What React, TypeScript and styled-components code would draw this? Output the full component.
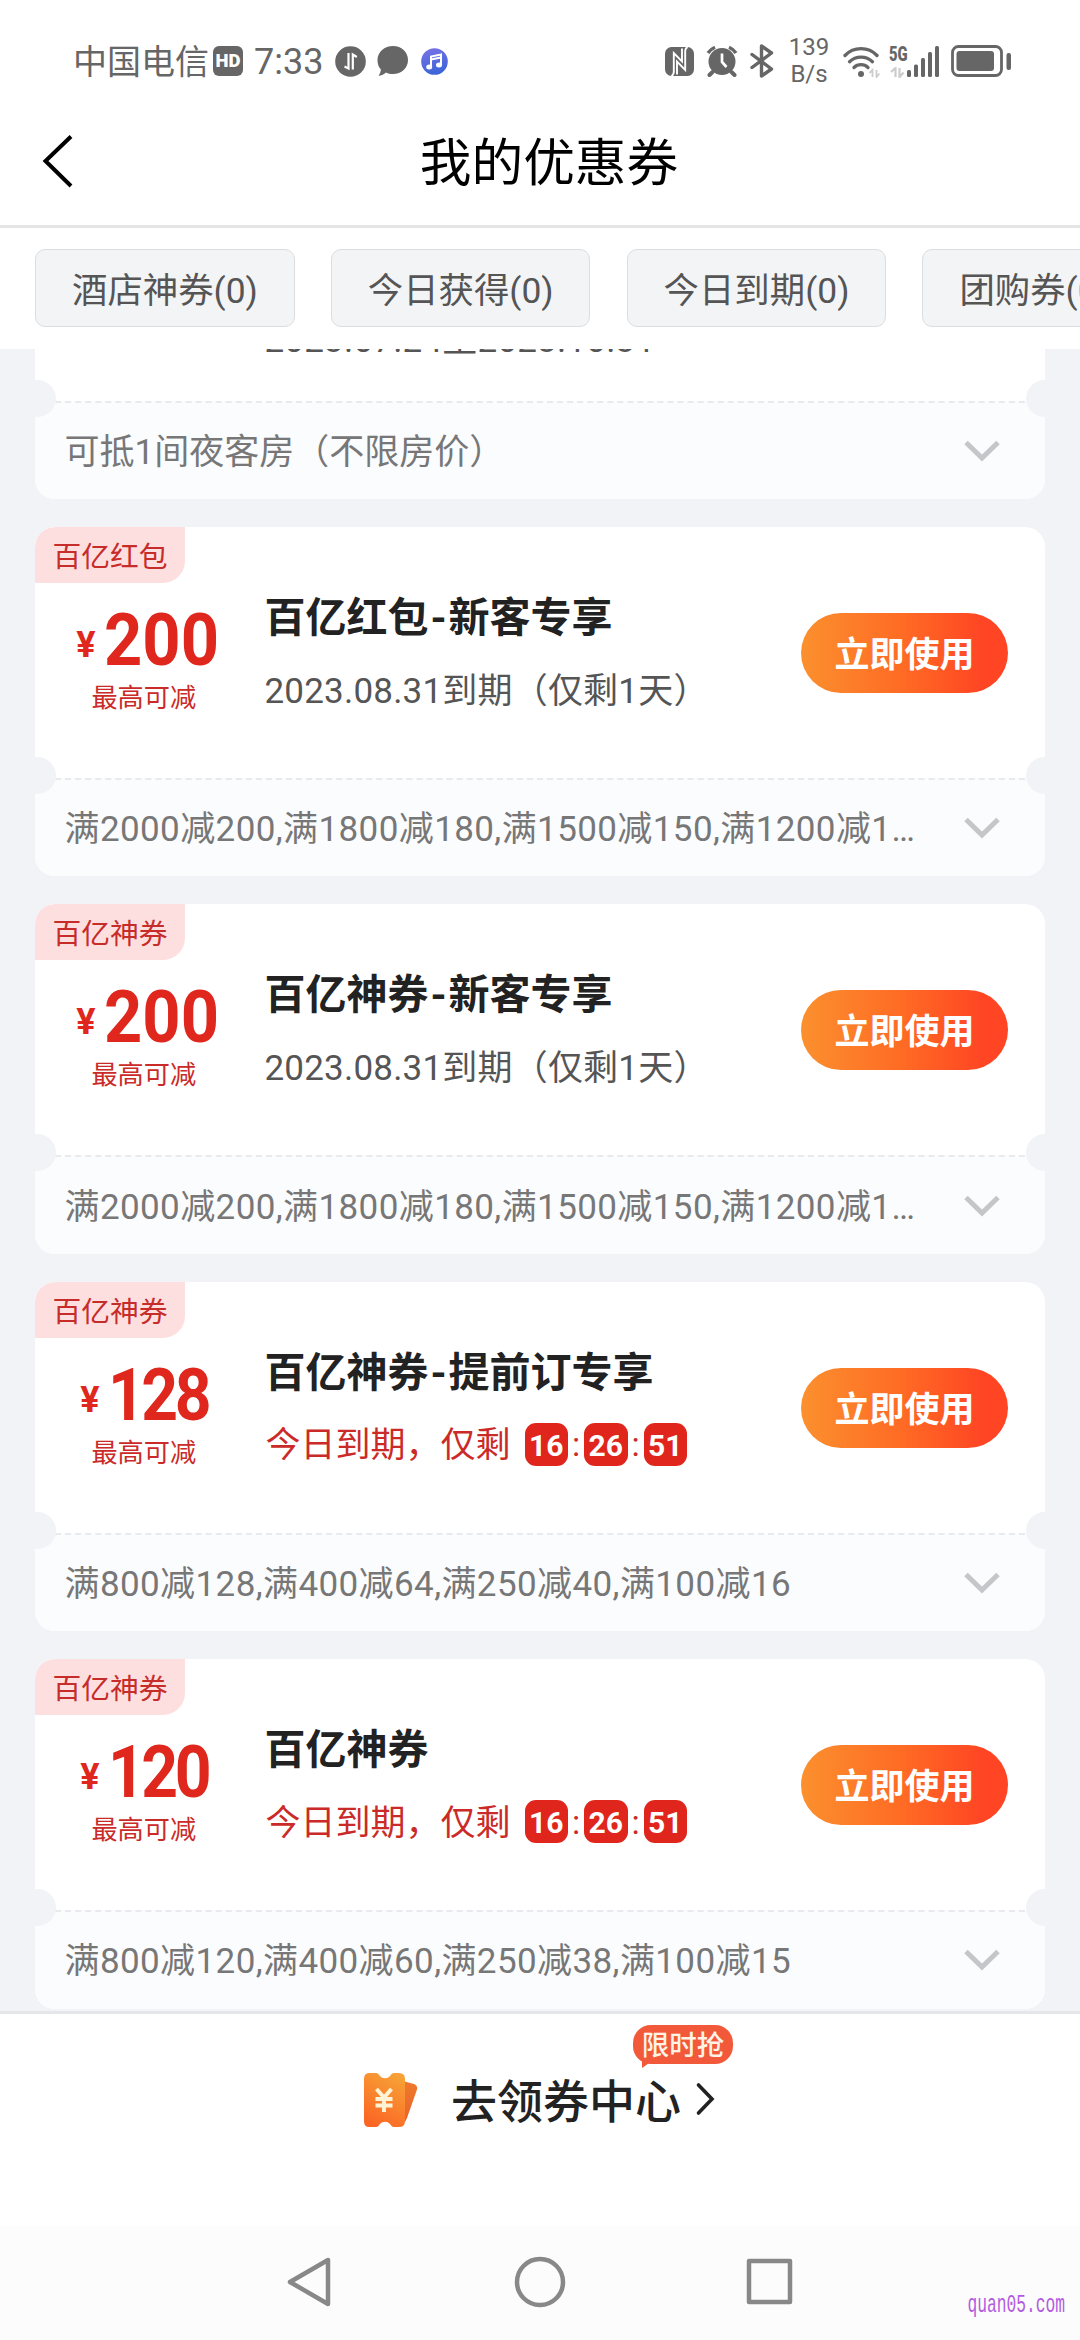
import React from 'react';
import styled, { createGlobalStyle, css } from 'styled-components';

const GlobalStyle = createGlobalStyle`
  *, *::before, *::after { box-sizing: border-box; }
  html, body { margin: 0; padding: 0; background: #fff; }
  body { font-family: "Noto Sans CJK SC", "Noto Sans", sans-serif; }
  svg { display: block; flex: none; }
`;

/* Latin digits come from Roboto, Chinese glyphs from Noto */
const mixedFont = css`
  font-family: Roboto, "Noto Sans CJK SC", sans-serif;
`;

const Screen = styled.main`
  position: relative;
  width: 1080px;
  height: 2340px;
  display: flex;
  flex-direction: column;
  overflow: hidden;
  background: #fff;
  color: #222;
`;

/* ---------- status bar ---------- */

const StatusBar = styled.header`
  flex: none;
  height: 118px;
  padding: 4px 68px 0 73px;
  display: flex;
  align-items: center;
  justify-content: space-between;
  color: #666;
`;

const StatusGroup = styled.div`
  display: flex;
  align-items: center;
`;

const Carrier = styled.span`
  font-size: 34px;
  line-height: 40px;
  padding-bottom: 3px;
`;

const Clock = styled.span`
  ${mixedFont}
  margin-left: 11px;
  padding-top: 2px;
  font-size: 36px;
  line-height: 40px;
`;

const HdBadge = styled.span`
  width: 30px;
  height: 30px;
  margin-left: 4px;
  border-radius: 6px;
  background: #666;
  color: #fff;
  font: 900 18.5px/31px Roboto, sans-serif;
  text-align: center;
`;

const IconSlot = styled.span<{ $ml: number }>`
  margin-left: ${(p) => p.$ml}px;
`;

const NetSpeed = styled.span`
  ${mixedFont}
  width: 44px;
  margin-left: 13px;
  margin-right: 1px;
  display: flex;
  flex-direction: column;
  align-items: center;
  font-size: 24px;
  line-height: 27px;
`;

/* ---------- title bar ---------- */

const TitleBar = styled.div`
  flex: none;
  height: 110px;
  padding: 0 34px 0 42px;
  display: grid;
  grid-template-columns: 32px 1fr 24px;
  align-items: center;
  border-bottom: 3px solid #e5e5e5;
`;

const PageTitle = styled.h1`
  margin: 0;
  padding: 0 0 25px 2px;
  text-align: center;
  font-size: 51.7px;
  font-weight: 400;
  line-height: 60px;
  color: #000;
`;

const BackIcon = styled.svg`
  margin-bottom: 22px;
`;

/* ---------- filter chips ---------- */

const Filters = styled.nav`
  flex: none;
  height: 121px;
  padding: 21px 0 0 35px;
  display: flex;
  gap: 36.3px;
  overflow: hidden;
`;

const Chip = styled.button`
  ${mixedFont}
  flex: none;
  min-width: 224px;
  height: 78px;
  padding: 6px 0 0 36px;
  border: 1px solid #dcdddf;
  border-radius: 10px;
  background: #f3f4f6;
  color: #555;
  font-size: 35.4px;
  line-height: 50px;
  text-align: left;
  white-space: nowrap;

  &:not(:last-child) {
    width: 259.5px;
  }
`;

/* ---------- coupons ---------- */

const List = styled.section`
  flex: none;
  height: 1662px;
  padding: 0 35px;
  display: flex;
  flex-direction: column;
  gap: 28px;
  overflow: hidden;
  background: #f2f3f7;
`;

const Card = styled.article<{ $scrolled?: boolean }>`
  position: relative;
  flex: none;
  height: 349.4px;
  margin-top: ${(p) => (p.$scrolled ? -199.4 : 0)}px;
  display: flex;
  flex-direction: column;
  border-radius: 20px;
  overflow: hidden;
  background: #fff;

  &::before,
  &::after {
    content: '';
    position: absolute;
    top: 230px;
    width: 37px;
    height: 37px;
    border-radius: 50%;
    background: #f2f3f7;
  }
  &::before { left: -16px; }
  &::after { right: -18px; }
`;

const Tag = styled.span`
  position: absolute;
  left: 0;
  top: 0;
  width: 150px;
  height: 56px;
  border-radius: 20px 0 22px 0;
  background: #fedfe0;
  color: #c62c2a;
  font-size: 28.8px;
  line-height: 55px;
  text-align: center;
`;

const CardBody = styled.div`
  flex: none;
  height: 251px;
  padding: 0 37px 0 0;
  display: grid;
  grid-template-columns: 229.5px 1fr 207px;
  align-items: start;
`;

const Amount = styled.div`
  padding: 83px 12px 0 0;
  display: flex;
  flex-direction: column;
  align-items: center;
  color: #df271d;
`;

const Price = styled.div`
  ${mixedFont}
  display: flex;
  align-items: baseline;
  height: 68px;
  line-height: 60px;
  font-weight: 700;
`;

const Yen = styled.span`
  font-size: 36px;
  position: relative;
  top: -8px;
`;

const Figure = styled.span<{ $narrow: boolean }>`
  font-size: 73px;
  letter-spacing: ${(p) => (p.$narrow ? -4 : 0)}px;
  margin-left: 8px;
  margin-right: ${(p) => (p.$narrow ? -14 : -18)}px;
  transform: scaleX(${(p) => (p.$narrow ? 0.88 : 0.915)});
  transform-origin: left center;
`;

const AmountNote = styled.div`
  font-size: 26.2px;
  line-height: 36px;
  color: #cb2b28;
`;

const Info = styled.div<{ $top: number }>`
  padding-top: ${(p) => p.$top}px;
`;

const CardTitle = styled.h2`
  ${mixedFont}
  margin: 0;
  font-size: 41px;
  font-weight: 700;
  line-height: 60px;
  white-space: nowrap;
`;

const Hyphen = styled.span`
  display: inline-block;
  width: 20px;
  text-align: center;
`;

const Expiry = styled.div<{ $urgent?: boolean }>`
  ${mixedFont}
  margin-top: 10px;
  padding-left: ${(p) => (p.$urgent ? 1 : 0)}px;
  display: flex;
  align-items: center;
  height: 58px;
  font-size: 35px;
  letter-spacing: ${(p) => (p.$urgent ? 0 : 0.2)}px;
  white-space: nowrap;
  color: ${(p) => (p.$urgent ? '#cb2b28' : '#555')};
`;

const Countdown = styled.span`
  margin: 5px 0 0 14px;
  display: flex;
  align-items: center;
`;

const TimeBox = styled.b`
  width: 43.5px;
  height: 43px;
  border-radius: 11px;
  background: #e0261c;
  color: #fff;
  font-size: 30px;
  line-height: 45px;
  text-align: center;
`;

const Colon = styled.span`
  width: 16px;
  text-align: center;
  font-size: 34px;
  line-height: 38px;
`;

const UseButton = styled.button`
  width: 207px;
  height: 80px;
  margin-top: 86px;
  padding: 0 0 3px;
  border: 0;
  border-radius: 40px;
  background: linear-gradient(90deg, #fb902e, #ff6a24 50%, #ff4524 88%);
  color: #fff;
  font-family: inherit;
  font-size: 35px;
  font-weight: 700;
`;

const Terms = styled.div`
  flex: 1;
  padding: 0 45px 0 29.5px;
  display: flex;
  align-items: center;
  justify-content: space-between;
  border-top: 2px dashed #e9eaed;
  background: #fbfcfe;
  color: #777;
  font-size: 35px;
  line-height: 50px;
`;

const TermsText = styled.span<{ $tight: boolean }>`
  ${mixedFont}
  padding-top: 4px;
  letter-spacing: ${(p) => (p.$tight ? 0 : 0.4)}px;
  white-space: nowrap;
`;

/* ---------- bottom entry ---------- */

const Footer = styled.footer`
  flex: none;
  height: 215px;
  padding-left: 363px;
  display: flex;
  align-items: flex-start;
  border-top: 3px solid #e5e6ea;
  background: #fff;
`;

const Ticket = styled.svg`
  margin-top: 58px;
`;

const FooterLink = styled.a`
  position: relative;
  margin: 50px 0 0 32px;
  display: flex;
  align-items: center;
  font-size: 46px;
  font-weight: 500;
  line-height: 68px;
  color: #222;
`;

const ForwardIcon = styled.svg`
  margin: 2px 0 0 14px;
`;

const Badge = styled.span`
  position: absolute;
  left: 182px;
  top: -39px;
  width: 100px;
  height: 39px;
  border-radius: 18px;
  background: #f2593a;
  color: #fff3e6;
  font-size: 27.5px;
  line-height: 37px;
  text-align: center;

  &::after {
    content: '';
    position: absolute;
    left: 9px;
    top: 34px;
    border-top: 9px solid #f2593a;
    border-right: 13px solid transparent;
  }
`;

/* ---------- system navigation ---------- */

const NavBar = styled.nav`
  flex: 1;
  padding: 0 0 2px;
  display: flex;
  justify-content: center;
  align-items: center;
  gap: 178px;
  background: #fcfcfc;
`;

const Watermark = styled.span`
  position: absolute;
  right: 15px;
  bottom: 20px;
  font: 26px/30px "Liberation Mono", monospace;
  color: #b25be0;
  transform: scaleX(0.625);
  transform-origin: right center;
`;

const DownArrow = () => (
  <svg width="36" height="22" viewBox="0 0 36 22" fill="none" stroke="#c5c6c9" strokeWidth="5">
    <path d="M2 2.5 18 18 34 2.5" />
  </svg>
);

const SwapIcon = () => (
  <svg width="31" height="31" viewBox="0 0 31 31">
    <circle cx="15.500" cy="15.500" r="15.300" fill="#666" />
    <path d="M13.500 7v15.500L9.500 20.500M17.800 23.500V8.500l4 2.500" fill="none" stroke="#fff" strokeWidth="2.200" />
  </svg>
);

const BubbleIcon = () => (
  <svg width="31" height="30" viewBox="0 0 31 30" fill="#666">
    <path d="M16 0C24.500 0 31 6 31 14S24.500 28 16 28c-2.500 0-5-.5-7-1.500-2 1.800-4.500 3-7.500 3.300C3 28 3.800 25.500 3.800 23.300 1.600 21 .5 18 .5 14 .5 6 7.500 0 16 0Z" />
  </svg>
);

const MusicIcon = () => (
  <svg width="27" height="27" viewBox="0 0 27 27">
    <defs>
      <linearGradient id="music" x1="0" y1="0" x2=".3" y2="1">
        <stop offset="0" stopColor="#7b72e8" />
        <stop offset="1" stopColor="#3f66d8" />
      </linearGradient>
    </defs>
    <circle cx="13.500" cy="13.500" r="13.300" fill="url(#music)" />
    <path d="M10 19V8.500L20 6.500V17M10 11.500l10-2" fill="none" stroke="#fff" strokeWidth="2" />
    <ellipse cx="8.200" cy="19" rx="3" ry="2.500" fill="#fff" />
    <ellipse cx="18" cy="17" rx="3" ry="2.500" fill="#fff" />
  </svg>
);

const NfcIcon = () => (
  <svg width="29" height="29" viewBox="0 0 29 29">
    <rect width="29" height="29" rx="6.500" fill="#666" />
    <path d="M6.500 29Q8.800 27.500 8.800 25V6L17 14.500V1.500M22.500 0Q20.200 1.500 20.200 4V23L12 14.500V27.500" fill="none" stroke="#fff" strokeWidth="1.900" />
  </svg>
);

const AlarmIcon = () => (
  <svg width="32" height="32" viewBox="0 0 32 32">
    <circle cx="16" cy="16.500" r="13.500" fill="#666" />
    <path d="M6.500 27 3.500 30M25.500 27l3 3" stroke="#666" strokeWidth="4" strokeLinecap="round" />
    <path d="M2 8A16 16 0 0 1 9 2.200M23 2.200a16 16 0 0 1 7 5.800" fill="none" stroke="#666" strokeWidth="3.400" />
    <path d="M16 8.500v8.500l4.500 5" fill="none" stroke="#fff" strokeWidth="2.700" />
  </svg>
);

const BluetoothIcon = () => (
  <svg width="24" height="34" viewBox="0 0 24 34" fill="none" stroke="#666" strokeWidth="3.400" strokeLinejoin="round" strokeLinecap="round">
    <path d="M2 10.500 21.500 25 11.500 32V2l10 7L2 23.500" />
  </svg>
);

const WifiIcon = () => (
  <svg width="38" height="33" viewBox="0 0 38 33">
    <g fill="none" stroke="#666" strokeWidth="3.300" strokeLinecap="round">
      <path d="M2 10.500a22 22 0 0 1 32 0" />
      <path d="M6.500 16.700a16.500 16.500 0 0 1 23 0" />
      <path d="M11 22.500a10 10 0 0 1 14 0" />
    </g>
    <circle cx="18" cy="29" r="3" fill="#666" />
    <path d="M29.500 32V25L26.500 28M33.500 25v7l3-3.500" fill="none" stroke="#ccc" strokeWidth="1.800" />
  </svg>
);

const CellGroup = styled.span`
  margin-left: 8px;
  display: flex;
  align-items: flex-end;
`;

const CellType = styled.span`
  width: 18px;
  height: 33px;
  display: flex;
  flex-direction: column;
  justify-content: space-between;
  font: 700 20px/18px Roboto, sans-serif;

  & > b {
    transform: scaleX(0.74);
    transform-origin: left center;
  }
`;

const CellIcon = () => (
  <CellGroup>
    <CellType>
      <b>5G</b>
      <svg width="16" height="11" viewBox="0 0 16 11">
        <path d="M6.500 10V1L2 5M10.500 1v9l4-4.500" fill="none" stroke="#ccc" strokeWidth="2.200" />
      </svg>
    </CellType>
    <svg width="33" height="33" viewBox="0 0 33 33" fill="#666">
      <rect x="0" y="25" width="4" height="7" rx="1.500" />
      <rect x="7" y="19.500" width="4" height="12.500" rx="1.500" />
      <rect x="14" y="13" width="4" height="19" rx="1.500" />
      <rect x="21" y="7" width="4" height="25" rx="1.500" />
      <rect x="28" y="1" width="4" height="31" rx="1.500" />
    </svg>
  </CellGroup>
);

const BatteryIcon = () => (
  <svg width="61" height="32" viewBox="0 0 61 32">
    <rect x="1.500" y="1.500" width="49" height="29" rx="6" fill="none" stroke="#666" strokeWidth="2.800" />
    <rect x="5.500" y="6" width="37.500" height="20" rx="3" fill="#666" />
    <rect x="55.500" y="8" width="4.500" height="17" rx="2" fill="#666" />
  </svg>
);

const TicketIcon = () => (
  <Ticket width="56" height="56" viewBox="0 0 56 56">
    <defs>
      <linearGradient id="ticketFront" x1=".7" y1="0" x2=".3" y2="1">
        <stop offset="0" stopColor="#f7a136" />
        <stop offset="1" stopColor="#fb6524" />
      </linearGradient>
      <linearGradient id="ticketBack" x1="0" y1="0" x2="0" y2="1">
        <stop offset="0" stopColor="#ee7a2c" />
        <stop offset="1" stopColor="#e9622a" />
      </linearGradient>
    </defs>
    <path d="M36 8 51 12q4 1.500 3 5.500L44 46q-2 6-8 6Z" fill="url(#ticketBack)" />
    <path d="M6 1h7c2 0 2.500 1 4 3 2.500 3 7.500 3 10 0 1.500-2 2-3 4-3h5q6 0 6 6v42q0 6-6 6h-5c-2 0-2.500-1-4-3-2.500-3-7.500-3-10 0-1.500 2-2 3-4 3H6q-5 0-5-6V7q0-6 5-6Z" fill="url(#ticketFront)" />
    <path d="m13.500 17 7.500 8.500 7.500-8.500M21 26v14M12.500 27h17M12.500 33.500h17" fill="none" stroke="#fff3d6" strokeWidth="4" />
  </Ticket>
);

type Coupon = {
  tag?: string;
  amount?: string;
  title?: string[];
  expiry?: string;
  countdown?: string[];
  terms: string;
};

const coupons: Coupon[] = [
  { expiry: '2023.07.24至2023.10.31', terms: '可抵1间夜客房（不限房价）' },
  { tag: '百亿红包', amount: '200', title: ['百亿红包', '新客专享'], expiry: '2023.08.31到期（仅剩1天）', terms: '满2000减200,满1800减180,满1500减150,满1200减1…' },
  { tag: '百亿神券', amount: '200', title: ['百亿神券', '新客专享'], expiry: '2023.08.31到期（仅剩1天）', terms: '满2000减200,满1800减180,满1500减150,满1200减1…' },
  { tag: '百亿神券', amount: '128', title: ['百亿神券', '提前订专享'], countdown: ['16', '26', '51'], terms: '满800减128,满400减64,满250减40,满100减16' },
  { tag: '百亿神券', amount: '120', title: ['百亿神券'], countdown: ['16', '26', '51'], terms: '满800减120,满400减60,满250减38,满100减15' },
];

const CouponCard = ({ coupon, scrolled }: { coupon: Coupon; scrolled: boolean }) => (
  <Card $scrolled={scrolled}>
    {coupon.tag && <Tag>{coupon.tag}</Tag>}
    <CardBody>
      <Amount>
        {coupon.amount && (
          <>
            <Price>
              <Yen>¥</Yen>
              <Figure $narrow={coupon.amount.startsWith('1')}>{coupon.amount}</Figure>
            </Price>
            <AmountNote>最高可减</AmountNote>
          </>
        )}
      </Amount>
      <Info $top={scrolled ? 148 : 61}>
        {coupon.title && (
          <CardTitle>
            {coupon.title[0]}
            {coupon.title[1] && <Hyphen>-</Hyphen>}
            {coupon.title[1]}
          </CardTitle>
        )}
        {coupon.expiry && <Expiry>{coupon.expiry}</Expiry>}
        {coupon.countdown && (
          <Expiry $urgent>
            今日到期，仅剩
            <Countdown>
              {coupon.countdown.map((part, i) => (
                <React.Fragment key={i}>
                  {i > 0 && <Colon>:</Colon>}
                  <TimeBox>{part}</TimeBox>
                </React.Fragment>
              ))}
            </Countdown>
          </Expiry>
        )}
      </Info>
      {coupon.tag && <UseButton>立即使用</UseButton>}
    </CardBody>
    <Terms>
      <TermsText $tight={scrolled}>{coupon.terms}</TermsText>
      <DownArrow />
    </Terms>
  </Card>
);

export default function App() {
  return (
    <Screen>
      <GlobalStyle />
      <StatusBar>
        <StatusGroup>
          <Carrier>中国电信</Carrier>
          <HdBadge>HD</HdBadge>
          <Clock>7:33</Clock>
          <IconSlot $ml={12}><SwapIcon /></IconSlot>
          <IconSlot $ml={11}><BubbleIcon /></IconSlot>
          <IconSlot $ml={13}><MusicIcon /></IconSlot>
        </StatusGroup>
        <StatusGroup>
          <NfcIcon />
          <IconSlot $ml={12}><AlarmIcon /></IconSlot>
          <IconSlot $ml={12}><BluetoothIcon /></IconSlot>
          <NetSpeed>
            <span>139</span>
            <span>B/s</span>
          </NetSpeed>
          <IconSlot $ml={11}><WifiIcon /></IconSlot>
          <CellIcon />
          <IconSlot $ml={11}><BatteryIcon /></IconSlot>
        </StatusGroup>
      </StatusBar>

      <TitleBar>
        <BackIcon width="32" height="54" viewBox="0 0 32 54" fill="none" stroke="#000" strokeWidth="4">
          <path d="M29 2.500 3.500 27 29 52" />
        </BackIcon>
        <PageTitle>我的优惠券</PageTitle>
      </TitleBar>

      <Filters>
        <Chip>酒店神券(0)</Chip>
        <Chip>今日获得(0)</Chip>
        <Chip>今日到期(0)</Chip>
        <Chip>团购券(0)</Chip>
      </Filters>

      <List>
        {coupons.map((coupon, i) => (
          <CouponCard key={i} coupon={coupon} scrolled={i === 0} />
        ))}
      </List>

      <Footer>
        <TicketIcon />
        <FooterLink>
          去领券中心
          <ForwardIcon width="20" height="34" viewBox="0 0 20 34" fill="none" stroke="#222" strokeWidth="3.600" strokeLinecap="round">
            <path d="M3.500 3 17 17 3.500 31" />
          </ForwardIcon>
          <Badge>限时抢</Badge>
        </FooterLink>
      </Footer>

      <NavBar>
        <svg width="50" height="54" viewBox="0 0 50 54" fill="none" stroke="#888" strokeWidth="4.500" strokeLinejoin="round">
          <path d="M43 5v44L5 27Z" />
        </svg>
        <svg width="54" height="54" viewBox="0 0 54 54" fill="none" stroke="#888" strokeWidth="4.500">
          <circle cx="27" cy="27" r="23" />
        </svg>
        <svg width="50" height="54" viewBox="0 0 50 54" fill="none" stroke="#888" strokeWidth="4.500" strokeLinejoin="round">
          <rect x="4" y="6" width="41" height="41" />
        </svg>
      </NavBar>
      <Watermark>quan05.com</Watermark>
    </Screen>
  );
}
